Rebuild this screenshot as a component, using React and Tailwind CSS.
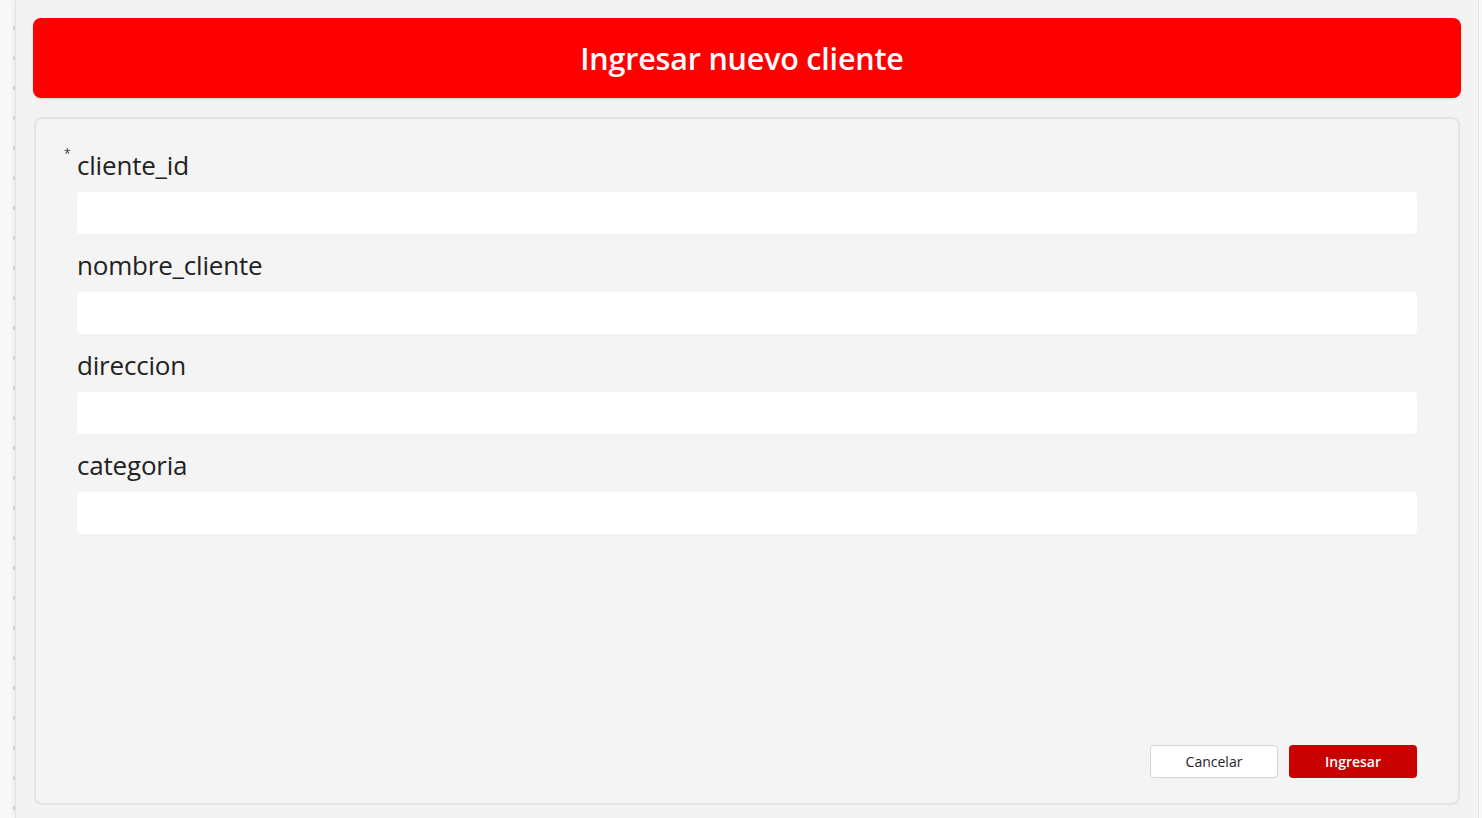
import React from "react";

const FIELDS = [
  { id: "cliente_id", required: true },
  { id: "nombre_cliente" },
  { id: "direccion" },
  { id: "categoria" },
];

export default function App() {
  const dots = Array.from({ length: 27 });

  return (
    <div
      className="flex h-[818px] w-[1482px] overflow-hidden bg-[#f8f8f8]"
      style={{ fontFamily: "'Open Sans', 'Noto Sans', sans-serif" }}
    >
      {/* canvas edge */}
      <div className="w-[15px] shrink-0 flex flex-col items-end pt-[26px] gap-[26px]">
        {dots.map((_, i) => (
          <div key={i} className="h-[4px] w-[2px] rounded-full bg-[#d8d8d8]" />
        ))}
      </div>

      {/* screen */}
      <div className="flex-1 flex flex-col bg-[#f3f3f3] border-l border-r border-[#e2e2e2] shadow-[-2px_0_4px_rgba(0,0,0,0.05)] px-[17px] pt-[18px] pb-[13px]">
        <div className="h-[80px] shrink-0 rounded-[8px] bg-[#ff0000] flex items-center justify-center pr-[10px] pt-[2px] shadow-[0_1px_2px_rgba(0,0,0,0.15)]">
          <h1 className="text-[30.5px] font-semibold text-white tracking-[-0.2px]">Ingresar nuevo cliente</h1>
        </div>

        <div className="mt-[19px] mx-[1px] flex-1 flex flex-col rounded-[8px] border-2 border-[#e4e4e4] bg-[#f4f4f4] pl-[41px] pr-[41px] pt-[15px] pb-[25px]">
          {FIELDS.map((f) => (
            <div key={f.id} className="pt-[13px]">
              <div className="relative h-[36px] flex items-center">
                {f.required && (
                  <span className="absolute left-[-13px] top-[-2px] text-[12px] text-[#333]">*</span>
                )}
                <span className="text-[26px] leading-none font-medium text-[#222] tracking-[-0.2px]">{f.id}</span>
              </div>
              <input
                type="text"
                className="mt-[9px] block h-[42px] w-full rounded-[4px] bg-white outline-none px-3 text-[16px]"
              />
            </div>
          ))}

          <div className="flex-1" />

          <div className="flex justify-end gap-[11px]">
            <button className="h-[33px] w-[128px] rounded-[4px] border border-[#d4d4d4] bg-white text-[14px] font-medium text-[#242424]">
              Cancelar
            </button>
            <button className="h-[33px] w-[128px] rounded-[4px] bg-[#c80000] text-[14px] font-semibold text-white">
              Ingresar
            </button>
          </div>
        </div>
      </div>
      <div className="w-[3px] shrink-0 bg-[#f8f8f8]" />
    </div>
  );
}
